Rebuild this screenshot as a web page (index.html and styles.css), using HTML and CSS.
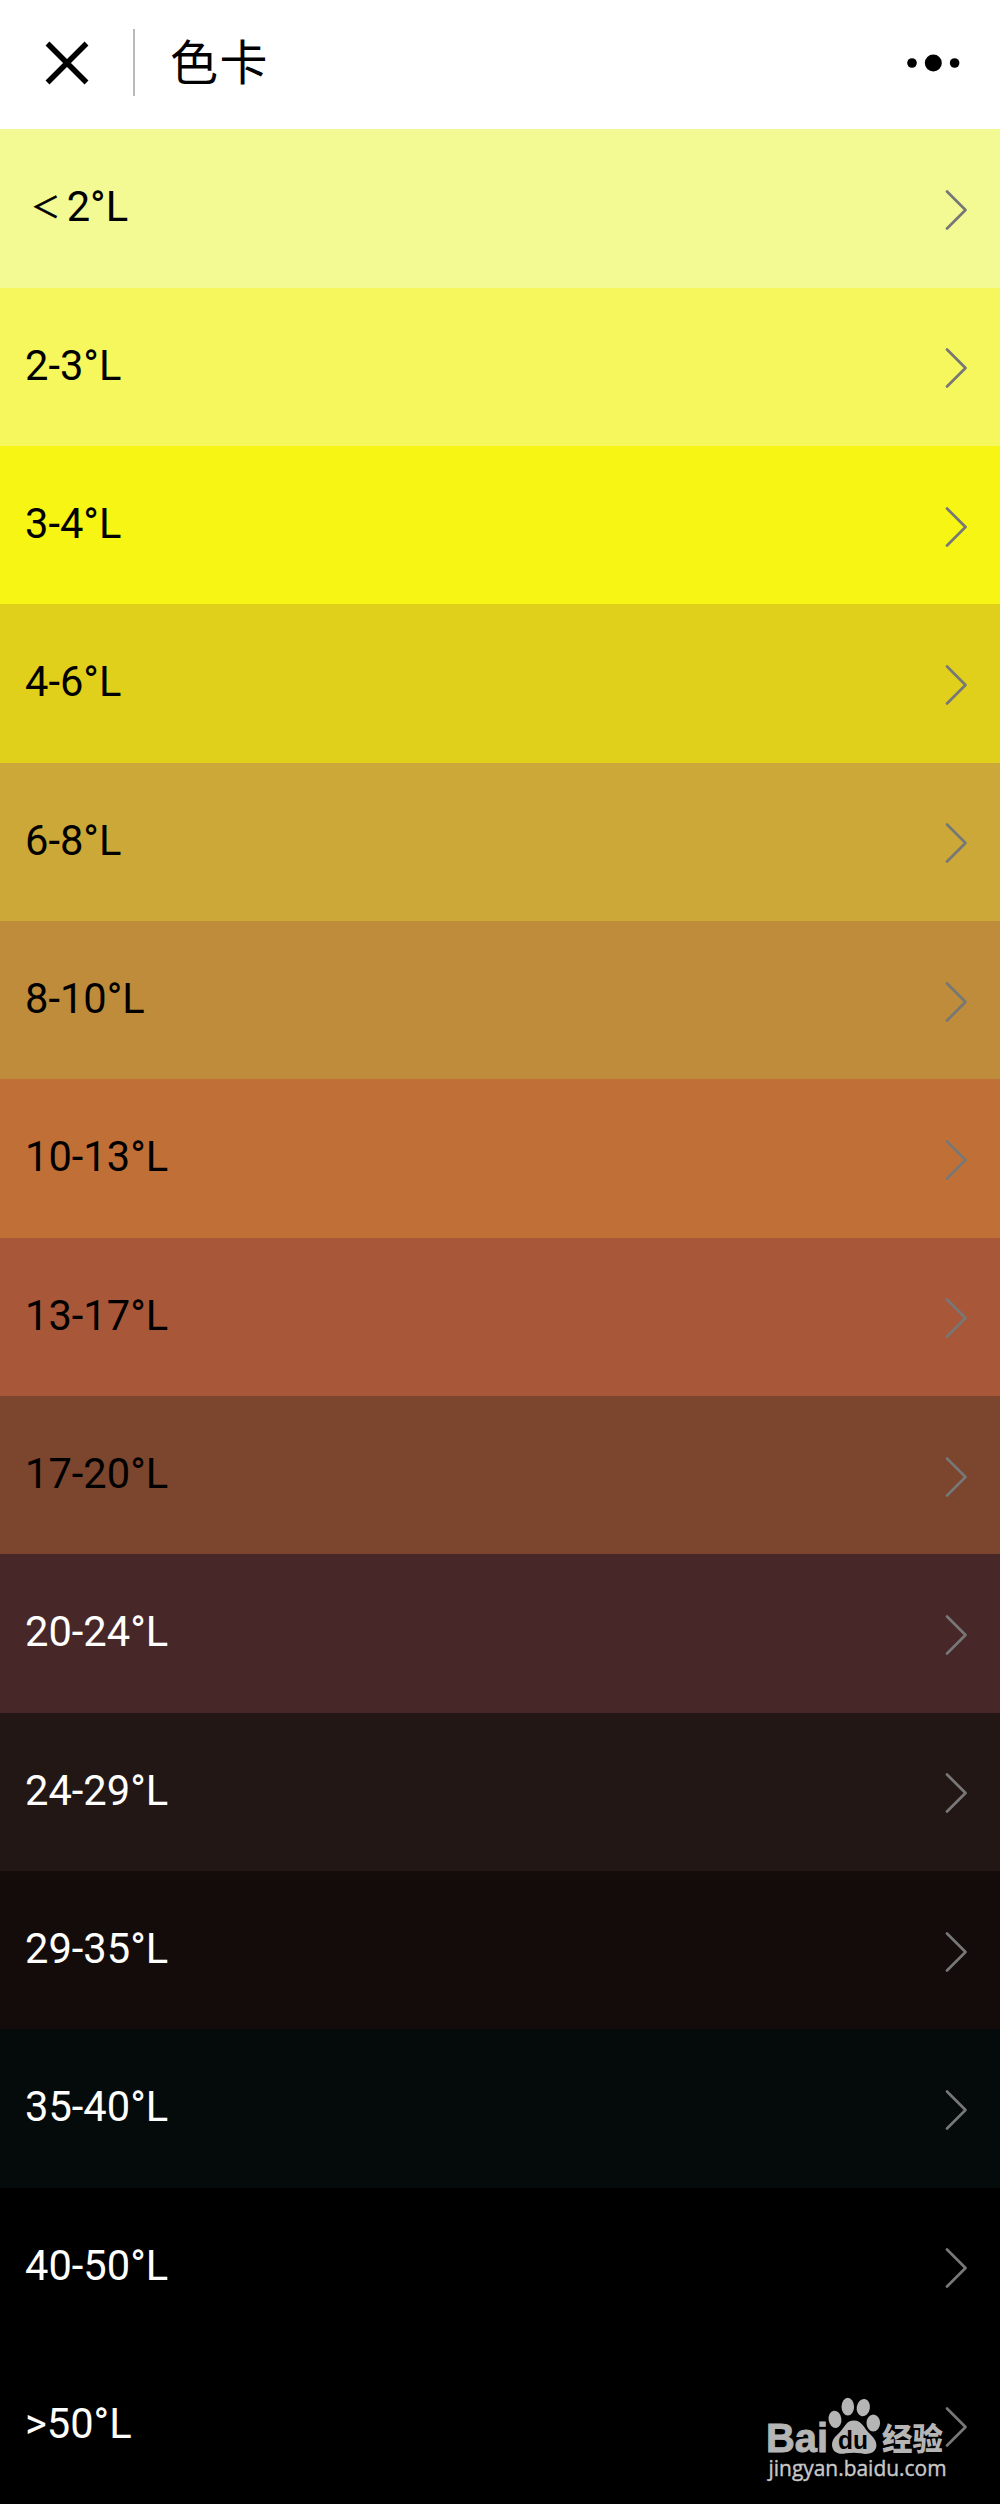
FILE: index.html
```html
<!DOCTYPE html>
<html lang="zh-CN">
<head>
    <meta charset="UTF-8">
    <meta name="viewport" content="width=device-width, initial-scale=1.0">
    <title>色卡</title>
    <link rel="stylesheet" href="styles.css">
</head>
<body>
    <svg class="sprite" width="0" height="0">
        <symbol id="chevron" viewBox="0 0 24 42">
            <path d="M3 2.500 L21.500 21 L3 39.500" fill="none" stroke="currentColor" stroke-width="2.700" stroke-linecap="round" stroke-linejoin="round"/>
        </symbol>
    </svg>

    <header class="navbar">
        <svg class="close" width="44" height="44" viewBox="0 0 44 44">
            <path d="M2.5 2.5 L41.5 41.5 M41.5 2.5 L2.5 41.5" stroke="#000" stroke-width="5.5"/>
        </svg>
        <div class="divider"></div>
        <h1 class="title">色卡</h1>
        <svg class="more" width="54" height="18" viewBox="0 0 54 18">
            <circle cx="5" cy="9" r="4.8"/>
            <circle cx="26.3" cy="9" r="8.5"/>
            <circle cx="47.6" cy="9" r="4.8"/>
        </svg>
    </header>

    <main class="color-list">
        <div class="row srm-1"><span><i class="lt">＜</i>2°L</span><svg class="arrow"><use href="#chevron"/></svg></div>
        <div class="row srm-2"><span>2-3°L</span><svg class="arrow"><use href="#chevron"/></svg></div>
        <div class="row srm-3"><span>3-4°L</span><svg class="arrow"><use href="#chevron"/></svg></div>
        <div class="row srm-4"><span>4-6°L</span><svg class="arrow"><use href="#chevron"/></svg></div>
        <div class="row srm-5"><span>6-8°L</span><svg class="arrow"><use href="#chevron"/></svg></div>
        <div class="row srm-6"><span>8-10°L</span><svg class="arrow"><use href="#chevron"/></svg></div>
        <div class="row srm-7"><span>10-13°L</span><svg class="arrow"><use href="#chevron"/></svg></div>
        <div class="row srm-8"><span>13-17°L</span><svg class="arrow"><use href="#chevron"/></svg></div>
        <div class="row srm-9"><span>17-20°L</span><svg class="arrow"><use href="#chevron"/></svg></div>
        <div class="row dark srm-10"><span>20-24°L</span><svg class="arrow"><use href="#chevron"/></svg></div>
        <div class="row dark srm-11"><span>24-29°L</span><svg class="arrow"><use href="#chevron"/></svg></div>
        <div class="row dark srm-12"><span>29-35°L</span><svg class="arrow"><use href="#chevron"/></svg></div>
        <div class="row dark srm-13"><span>35-40°L</span><svg class="arrow"><use href="#chevron"/></svg></div>
        <div class="row dark srm-14"><span>40-50°L</span><svg class="arrow"><use href="#chevron"/></svg></div>
        <div class="row dark srm-15"><span>&gt;50°L</span><svg class="arrow"><use href="#chevron"/></svg></div>
    </main>

    <svg class="watermark" width="200" height="110" viewBox="0 0 200 110">
        <text class="wm-bai" x="3" y="62" textLength="62" lengthAdjust="spacingAndGlyphs">Bai</text>
        <ellipse cx="72" cy="29.3" rx="6.4" ry="8.7" transform="rotate(-8 72 29.3)"/>
        <ellipse cx="84.8" cy="16.7" rx="6.3" ry="8.9"/>
        <ellipse cx="100.3" cy="17.6" rx="6.6" ry="8.7" transform="rotate(10 100.3 17.6)"/>
        <ellipse cx="110.3" cy="33" rx="6.8" ry="8.6"/>
        <path d="M91 30.5 C99 30.5 101 38 106 43 C111 48 114 51 113.3 57 C111.5 64.500 103 64.500 98 63.300 C93 62.500 88 62.500 83 63.300 C76 65 69.500 62.500 69 55 C69 49 73 46 77 42 C82 37 83 30.5 91 30.5 Z"/>
        <text class="wm-du" x="75" y="58.500" textLength="30" lengthAdjust="spacingAndGlyphs">du</text>
        <text class="wm-cn" x="119" y="60" textLength="61" lengthAdjust="spacingAndGlyphs">经验</text>
        <text class="wm-url" x="5.5" y="86" textLength="178" lengthAdjust="spacingAndGlyphs">jingyan.baidu.com</text>
    </svg>
</body>
</html>
```
FILE: styles.css
```css
body {
    margin: 0;
    height: 2504px;
    overflow: hidden;
    position: relative;
    background-color: #000;
    font-family: Roboto, "Noto Sans CJK SC", sans-serif;
}

.sprite {
    position: absolute;
}

.navbar {
    display: flex;
    align-items: center;
    box-sizing: border-box;
    height: 129.3px;
    padding: 0 39px 4px 45px;
    background-color: #fff;
}

.close {
    flex: none;
}

.divider {
    width: 2px;
    height: 67px;
    margin-left: 44px;
    background-color: #b9b9b9;
}

.title {
    flex: 1;
    margin: 2px 0 0 35px;
    font-size: 48px;
    font-weight: 400;
    line-height: 60px;
    letter-spacing: 1.5px;
    color: #000;
}

.row {
    display: flex;
    align-items: center;
    justify-content: space-between;
    box-sizing: border-box;
    height: 158.33px;
    padding: 0 32px 0 25px;
    font-size: 41.67px;
    line-height: 50px;
    color: #000;
}

.row span {
    margin-bottom: 2px;
}

.lt {
    display: inline-block;
    width: 35.67px;
    padding-left: 6px;
    font-size: 29px;
    font-style: normal;
    line-height: 1;
    vertical-align: 3px;
    -webkit-text-stroke: 0.6px currentColor;
}

.arrow {
    width: 24px;
    height: 42px;
    margin-top: 3px;
    color: #777;
}

.dark {
    color: #fff;
}

.srm-1 { background-color: #f3f993; }
.srm-2 { background-color: #f5f75c; }
.srm-3 { background-color: #f6f513; }
.srm-4 { background-color: #e0d01b; }
.srm-5 { background-color: #cba837; }
.srm-6 { background-color: #be8c3a; }
.srm-7 { background-color: #c07036; }
.srm-8 { background-color: #a85839; }
.srm-9 { background-color: #7c452d; }
.srm-10 { background-color: #482728; }
.srm-11 { background-color: #231716; }
.srm-12 { background-color: #130c0b; }
.srm-13 { background-color: #040b0a; }
.srm-14 { background-color: #000; }
.srm-15 { background-color: #000; }

.watermark {
    position: absolute;
    left: 763px;
    top: 2390px;
    fill: #b5b5b5;
}

.wm-bai {
    font-family: "Liberation Sans", Arial, sans-serif;
    font-size: 41px;
    font-weight: 700;
    stroke: #b5b5b5;
    stroke-width: 1px;
}

.wm-du {
    font-family: "Liberation Sans", Arial, sans-serif;
    font-size: 26px;
    font-weight: 700;
    fill: #000;
}

.wm-cn {
    font-family: "Noto Sans CJK SC", sans-serif;
    font-size: 31px;
    font-weight: 900;
}

.wm-url {
    font-family: "Open Sans", sans-serif;
    font-size: 22px;
    fill: #c8c8c8;
    stroke: #c8c8c8;
    stroke-width: 0.4px;
}
```
